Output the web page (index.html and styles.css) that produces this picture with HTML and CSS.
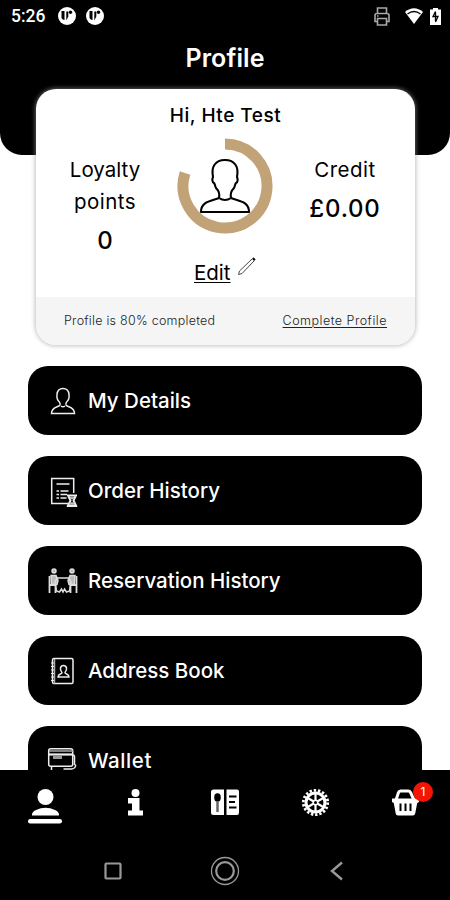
FILE: index.html
```html
<!DOCTYPE html>
<html lang="en">
<head>
  <meta charset="UTF-8" />
  <meta name="viewport" content="width=device-width, initial-scale=1.0" />
  <title>Profile</title>
  <link rel="stylesheet" href="styles.css">
</head>
<body>
  <div class="phone">
    <header class="header">
      <div class="status-bar">
        <span class="time">5:26</span>
        <svg class="app-icon" width="18" height="18" viewBox="0 0 18 18"><circle cx="9" cy="9" r="9" fill="#fff"/><path d="M3.500 4h3v9q-2 0-3-2zM8.300 4.500h2v5l-2 4z"/><circle cx="12.500" cy="5.300" r="1.700"/></svg>
        <svg class="app-icon" width="18" height="18" viewBox="0 0 18 18"><circle cx="9" cy="9" r="9" fill="#fff"/><path d="M3.500 4h3v9q-2 0-3-2zM8.300 4.500h2v5l-2 4z"/><circle cx="12.500" cy="5.300" r="1.700"/></svg>
        <svg class="printer" width="16" height="19" viewBox="0 0 16 19" fill="none" stroke="#a8a8a8" stroke-width="1.600"><path d="M3.500 6.500V1h9v5.500M3.500 14.500H1V8.500q0-2 2-2h10q2 0 2 2v6h-2.500M3.500 11.500h9V18h-9zM3 9h1.500"/></svg>
        <svg class="wifi" width="18" height="17" viewBox="0 0 18 17"><path d="M0 4Q9-3.500 18 4L9 16z" fill="#fff"/><path d="M2.500 6Q9 1 15.500 6" fill="none" stroke="#000" stroke-width="1.300"/></svg>
        <svg class="battery" width="11" height="17" viewBox="0 0 11 17"><path d="M3 0h5v1.500h3V17H0V1.500h3z" fill="#fff"/><path d="M5.500 3.500L3 8.500h5L5.500 14M5.500 4v9" fill="none" stroke="#000" stroke-width="1.300"/></svg>
      </div>
      <h1>Profile</h1>
    </header>

    <main class="content">
      <section class="card">
        <h2>Hi, Hte Test</h2>
        <div class="stats">
          <div class="stat">
            <span class="loyalty">Loyalty</span>
            <span class="points">points</span>
            <strong>0</strong>
          </div>
          <svg class="ring" width="96" height="96" viewBox="0 0 96 96">
            <path d="M48 6a42 42 0 1 1-39.940 29.020" fill="none" stroke="#c2a277" stroke-width="11"/>
            <path d="M42 60c1-4-1-8-3-10-1-2-1-4-2-5-2-1-2-4-1-6-2-10 2-17 12-17s14 7 12 17c1 2 1 5-1 6-1 1-1 3-2 5-2 2-4 6-3 10M42 60q6 4 12 0M42 60c-7 3-18 3-18 14h48c0-11-11-11-18-14" fill="none" stroke="#000" stroke-width="2.100" stroke-linejoin="round"/>
          </svg>
          <div class="stat">
            <span class="credit">Credit</span>
            <strong class="amount">£0.00</strong>
          </div>
        </div>
        <div class="edit">
          <a>Edit</a>
          <svg width="20" height="20" viewBox="0 0 20 20" fill="none" stroke="#333" stroke-width=".9"><path d="M1.500 18.500l1-3.500L15.500 2.500q1-1 2 0 1 1 0 2L5 17.500z"/><path d="M16 2.500l1.500 1.500" stroke="#000" stroke-width="2"/></svg>
        </div>
        <div class="card-footer">
          <span class="progress">Profile is 80% completed</span>
          <a class="complete">Complete Profile</a>
        </div>
      </section>

      <nav class="menu">
        <a class="item">
          <svg width="32" height="32" viewBox="0 0 32 32" fill="none" stroke="#eee" stroke-width="1.500"><path d="M13 20q.5-2-1-3.500-2.500-2-2-7 .5-6 6-6t6 6q.5 5-2 7-1.500 1.500-1 3.500c1 2.500 8.500 1 8.500 8.500H4.500c0-7.500 7.500-6 8.500-8.500M14 21q2 1.500 4 0"/></svg>
          <span class="my-details">My Details</span>
        </a>
        <a class="item">
          <svg width="32" height="32" viewBox="0 0 32 32" fill="none" stroke="#eee" stroke-width="1.500"><path d="M21 28.500H4.700V3.500h22V18M9.500 9h13"/><path d="M9.500 16H12m1.500 0h8M9.500 19.500H12m1.500 0h6.500M9.500 23H12m1.500 0h6" stroke-width="1.600"/><path d="M20 20.500h10M20 31h10M21.500 21.500l2 4-2.500 5h8l-2.500-5 2-4" stroke-width="2"/><path d="M23 23h4M22.500 28.500h5" stroke-width="2.500" stroke="#bbb"/></svg>
          <span class="order">Order History</span>
        </a>
        <a class="item">
          <svg width="32" height="32" viewBox="0 0 32 32" fill="none" stroke="#ddd" stroke-width="1.500"><g fill="#bbb"><circle cx="7" cy="6" r="2"/><circle cx="25" cy="6" r="2"/></g><path d="M2.500 11v17m0-8h6v8M29.500 11v17m0-8h-6v8" stroke-width="1.800"/><path d="M4 10.500h5l2 5-1 4H4.500zM28 10.500h-5l-2 5 1 4h5.500z" fill="#bbb"/><path d="M10 13h12l2 4-1.500 9-3 1-2-3-1.500 3-1.500-3-2 3-3-1L8 17z"/></svg>
          <span class="reservation">Reservation History</span>
        </a>
        <a class="item">
          <svg width="32" height="32" viewBox="0 0 32 32" fill="none" stroke="#eee" stroke-width="1.500"><rect x="5.500" y="3.500" width="20.500" height="25" rx="1.500"/><path d="M7.500 4v24.500" stroke="#aaa"/><path d="M4 8h3m-3 3.500h3M4 15h3m-3 3.500h3M4 22h3m-3 3.500h3" stroke-width="1"/><path d="M15 17.500q-2-2-1.500-4.500 .5-2.500 3-2.500t3 2.500q.5 2.500-1.500 4.500c0 2 4 1 4 4.500H11c0-3.500 4-2.500 4-4.500z"/></svg>
          <span class="address">Address Book</span>
        </a>
        <a class="item">
          <svg width="32" height="32" viewBox="0 0 32 32" fill="none" stroke="#eee" stroke-width="1.500"><rect x="1.700" y="3.700" width="24" height="17.500" rx="2"/><path d="M2 6h24" stroke="#aaa"/><path d="M2 9.500h24" stroke-width="2.200"/><path d="M6 12.500h9" stroke="#999" stroke-width="3"/><path d="M4.500 21.500v4M26 10q1.500 0 1.500 2v8M28.500 19.500q.5 4-4 4.500h-8"/></svg>
          <span class="wallet">Wallet</span>
        </a>
      </nav>
    </main>

    <footer class="bottom">
      <div class="tabs">
        <a><svg width="34" height="36" viewBox="0 0 34 36" fill="#fff"><circle cx="17.500" cy="8" r="8"/><path d="M4 26.500q-.5-3.500 4-5.500 9.500-4.500 19 0 4.500 2 4 5.500z"/><rect x="0" y="30" width="34" height="4.500" rx="2.200"/></svg></a>
        <a><svg width="34" height="36" viewBox="0 0 34 36" fill="#fff"><circle cx="17.500" cy="4" r="4"/><path d="M10 9h11.500v12.500h3.500v5H10v-5h4v-7h-4z"/></svg></a>
        <a><svg width="34" height="36" viewBox="0 0 34 36"><path d="M5.500.5H16V26H5.500Q3 26 3 23.500V3Q3 .5 5.500 .5zM18.500.5H29q2 0 2 2v21q0 2.500-2 2.500H18.500z" fill="#fff"/><ellipse cx="9.500" cy="8.500" rx="3.300" ry="4.200"/><path d="M9.500 12v11" stroke="#666" stroke-width="2.500"/><path d="M21 7.500h7.500M21 13h6M21 18.500h7.500" stroke="#000" stroke-width="2"/></svg></a>
        <a><svg width="34" height="36" viewBox="0 0 34 36" fill="none" stroke="#fff"><circle cx="17.500" cy="13.500" r="9.500" stroke-width="3"/><circle cx="17.500" cy="13.500" r="12.200" stroke-width="2.800" stroke-dasharray="2.400 1.858"/><path d="M17.500 4v19M9.300 8.700l16.400 9.600M9.300 18.300l16.400-9.600" stroke-width="2.200"/><circle cx="17.500" cy="13.500" r="3" fill="#fff" stroke="none"/><circle cx="17.500" cy="13.500" r="1.500" fill="#000" stroke="none"/></svg></a>
        <a class="basket"><svg width="34" height="36" viewBox="0 0 34 36"><path d="M8 11l2.500-7.500Q11 2 12.500 2h8Q22 2 22.500 3.500L26 11" fill="none" stroke="#fff" stroke-width="3"/><path d="M4 9.500H31v3.500l-1.800 1-2 10.500q-.5 2-2.200 2H10q-2 0-2.300-2L5.800 14 4 13z" fill="#fff"/><path d="M12.500 14.500V22M17.500 14.500V22M22.500 14.500V22" stroke="#000" stroke-width="2"/></svg><span class="badge">1</span></a>
      </div>
      <div class="system-nav">
        <svg width="18" height="18" viewBox="0 0 18 18"><rect x="1.500" y="1.500" width="15" height="15" rx="1" fill="none" stroke="#999" stroke-width="2.200"/></svg>
        <svg width="30" height="30" viewBox="0 0 30 30" fill="none" stroke="#999"><circle cx="15" cy="15" r="13.500" stroke-width="1.300"/><circle cx="15" cy="15" r="8.800" stroke-width="2.200"/></svg>
        <svg width="18" height="20" viewBox="0 0 18 20"><path d="M14 1.500L4 10l10 8.500" fill="none" stroke="#999" stroke-width="2.400"/></svg>
      </div>
    </footer>
  </div>
</body>
</html>
```
FILE: styles.css
```css
* {
  box-sizing: border-box;
}

body {
  margin: 0;
  background-color: #fff;
  color: #000;
  font-family: Inter, 'Liberation Sans', sans-serif;
}

svg {
  display: block;
  flex: none;
}

h1, h2 {
  margin: 0;
}

.phone {
  display: flex;
  flex-direction: column;
  height: 900px;
  width: 450px;
  overflow: hidden;
}

.header {
  flex: none;
  height: 155px;
  background-color: #000;
  border-radius: 0 0 22px 22px;
  color: #fff;
}

.status-bar {
  display: flex;
  align-items: center;
  height: 32px;
  padding: 0 9px 0 11px;
}

.time {
  width: 47px;
  font-family: Roboto, sans-serif;
  font-size: 17.5px;
  font-weight: 500;
}

.app-icon {
  margin-right: 10px;
}

.printer {
  margin-left: auto;
}

.wifi {
  margin: 0 7px 0 15px;
}

h1 {
  font-size: 25px;
  font-weight: 600;
  line-height: 52px;
  letter-spacing: 0.1px;
  text-align: center;
}

.content {
  flex: 1;
  min-height: 0;
  margin-top: -72px;
  overflow: hidden;
  padding: 6px 28px 0;
}

.card {
  height: 256px;
  margin: 0 7px 0 8px;
  display: flex;
  flex-direction: column;
  background-color: #fff;
  border-radius: 20px;
  box-shadow: 0 0 4px 1px rgba(150, 150, 150, 0.6);
  overflow: hidden;
}

h2 {
  padding-top: 12px;
  font-size: 19px;
  font-weight: 500;
  line-height: 30px;
  letter-spacing: 0.5px;
  text-align: center;
}

.stats {
  display: flex;
  justify-content: space-between;
  height: 125px;
  padding: 7px 25px 0 24px;
}

.stat {
  display: flex;
  flex-direction: column;
  align-items: center;
  width: 90px;
  padding-top: 16px;
  font-size: 20.5px;
  line-height: 32px;
}

.points {
  letter-spacing: 0.5px;
}

.credit {
  letter-spacing: 0.5px;
}

.stat strong {
  font-size: 24px;
  font-weight: 500;
  line-height: 46px;
}

.stat .amount {
  letter-spacing: 0.8px;
}

.edit {
  display: flex;
  gap: 6px;
  padding-left: 158px;
  font-size: 20.5px;
  line-height: 34px;
}

.edit a,
.complete {
  text-decoration: underline;
  text-decoration-thickness: 1px;
  text-underline-offset: 2px;
}

.card-footer {
  display: flex;
  justify-content: space-between;
  height: 48px;
  margin-top: auto;
  padding: 0 28px;
  background-color: #f5f5f5;
  font-size: 12.5px;
  font-weight: 300;
  line-height: 47px;
  color: #222;
}

.progress {
  letter-spacing: 0.25px;
}

.complete {
  letter-spacing: 0.5px;
}

.menu {
  display: flex;
  flex-direction: column;
  gap: 21px;
  padding-top: 21px;
}

.item {
  display: flex;
  align-items: center;
  gap: 9px;
  flex: none;
  height: 69px;
  padding-left: 19px;
  background-color: #000;
  border-radius: 20px;
  color: #fff;
  font-size: 20.5px;
  font-weight: 500;
  line-height: 18px;
}

.wallet {
  letter-spacing: 0.6px;
}

.bottom {
  flex: none;
  height: 130px;
  background-color: #000;
}

.tabs {
  display: flex;
  height: 71px;
  padding-top: 19px;
}

.tabs a {
  display: flex;
  justify-content: center;
  width: 90px;
}

.basket {
  position: relative;
}

.badge {
  position: absolute;
  top: -7px;
  left: 53px;
  width: 20px;
  height: 20px;
  border-radius: 50%;
  background-color: #f51505;
  color: #fff;
  font-size: 12px;
  line-height: 20px;
  text-align: center;
}

.system-nav {
  display: flex;
  align-items: center;
  justify-content: space-between;
  height: 59px;
  padding: 0 104px;
}
```
